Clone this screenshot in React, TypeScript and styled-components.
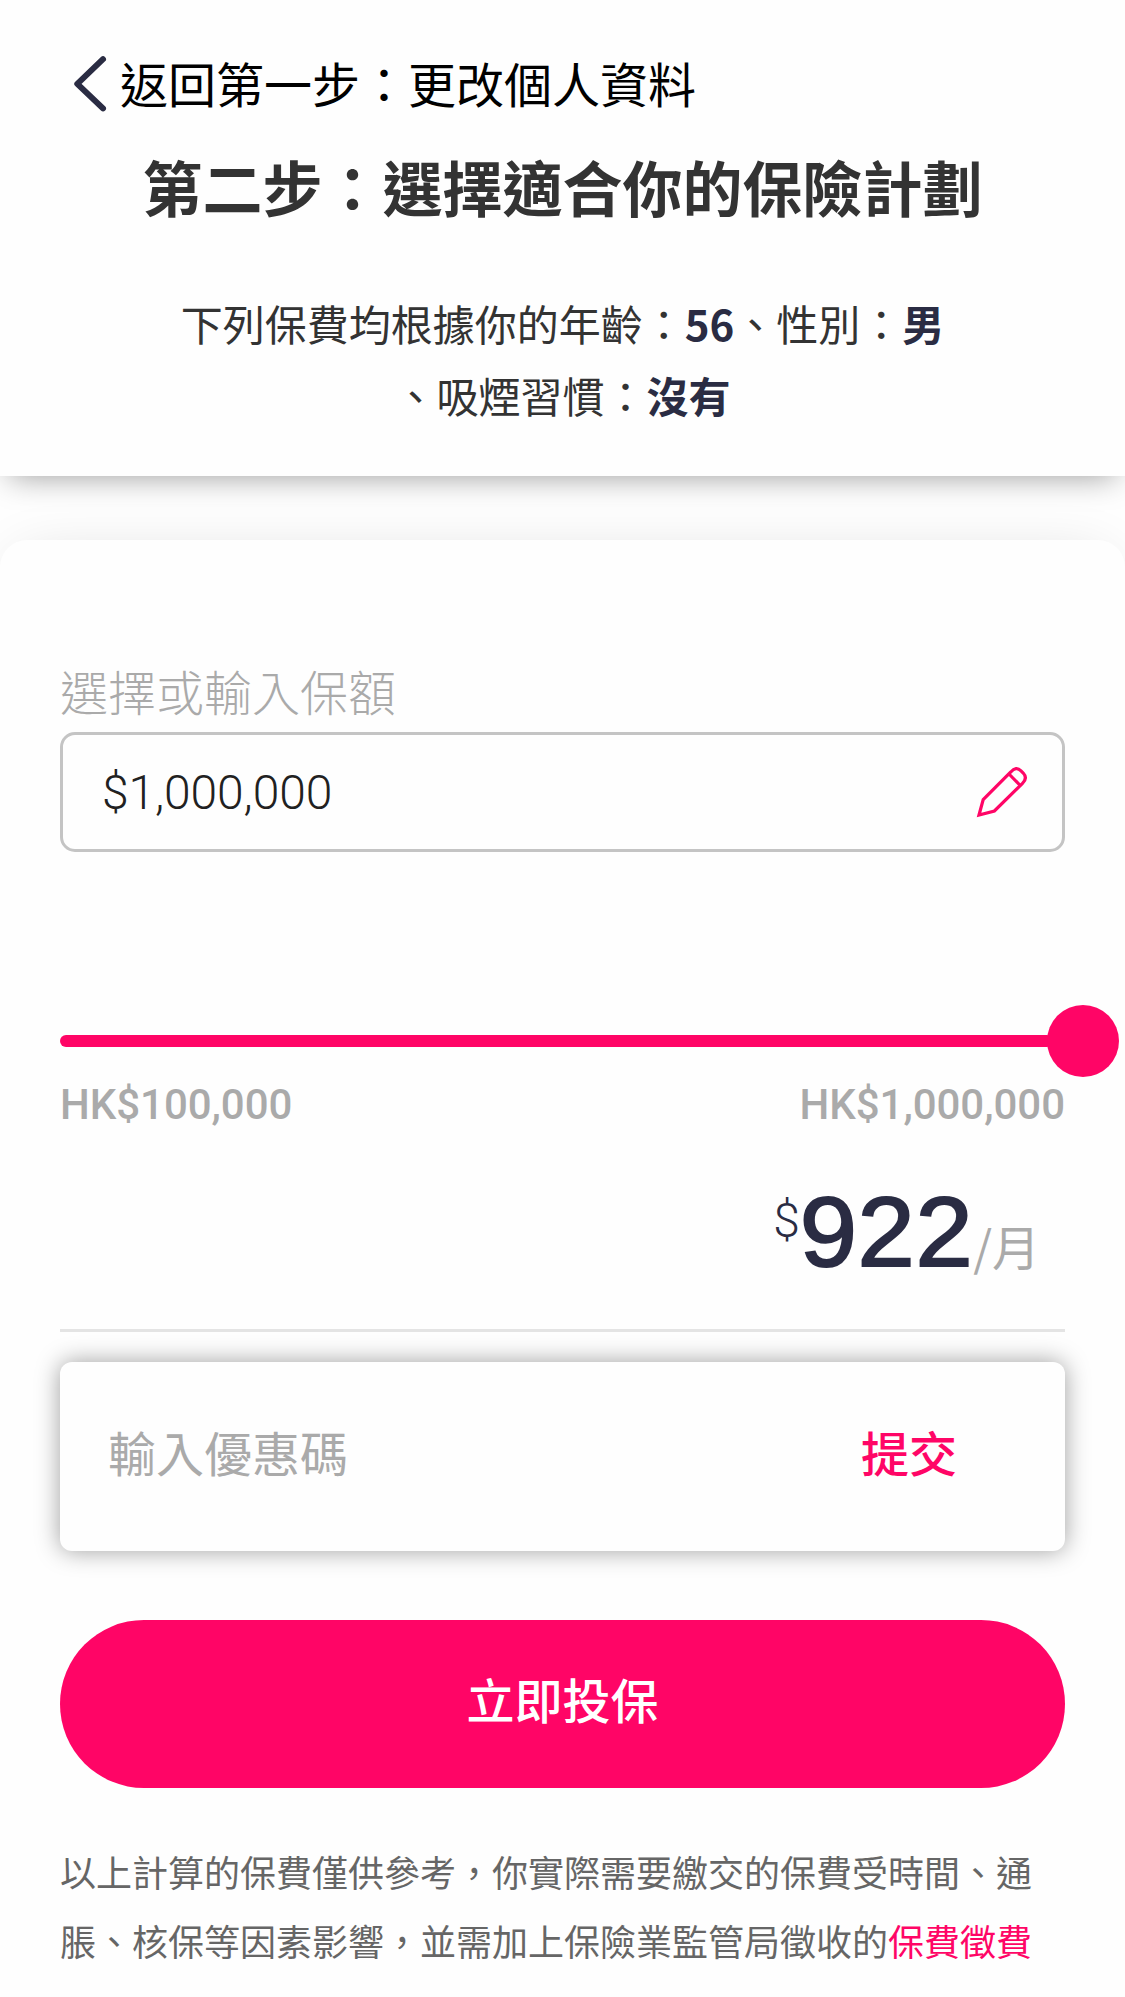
import React from "react";
import styled, { createGlobalStyle } from "styled-components";

const PINK = "#ff0566";
const NAVY = "#2a2c43";
const CJK = `"Noto Sans CJK TC", sans-serif`;
const LATIN = `Roboto, "Noto Sans CJK TC", sans-serif`;

const GlobalStyle = createGlobalStyle`
  *, *::before, *::after { box-sizing: border-box; }
  body { margin: 0; background: #fff; font-family: ${CJK}; }
  button, input { font: inherit; border: 0; padding: 0; background: none; outline: 0; }
`;

const Page = styled.main`
  display: flex;
  flex-direction: column;
  gap: 64px;
  width: 1125px;
  height: 1997px;
  overflow: hidden;
  background: #fefefe;
`;

const Header = styled.header`
  display: flex;
  flex-direction: column;
  height: 476px;
  padding: 48px 72px 0;
  background: #fefefe;
  box-shadow: 0 9px 30px -9px rgba(0, 0, 0, 0.4);
`;

const BackLink = styled.a`
  display: flex;
  align-items: center;
  height: 72px;
  color: #000;
  font-size: 48px;
  line-height: 72px;
  text-decoration: none;
`;

const BackText = styled.span`
  padding-bottom: 4px;
`;

const BackIcon = styled.svg`
  width: 48px;
  height: 60px;
  flex: none;
`;

const Title = styled.h1`
  margin: 24px 0 0;
  color: #333;
  font-size: 60px;
  font-weight: 700;
  line-height: 84px;
  text-align: center;
`;

const Summary = styled.p`
  margin: 59px 0 0;
  color: #333;
  font-size: 42px;
  line-height: 72px;
  text-align: center;
`;

const Value = styled.strong`
  color: ${NAVY};
  font-weight: 700;
`;

const Card = styled.section`
  display: flex;
  flex-direction: column;
  flex: 1;
  padding: 115px 60px 0;
  border-radius: 27px 27px 0 0;
  background: #fefefe;
  box-shadow: 0 0 60px -20px rgba(0, 0, 0, 0.16);
`;

const Label = styled.label`
  height: 77px;
  color: #aaa;
  font-size: 48px;
  font-weight: 300;
  line-height: 70px;
`;

const AmountField = styled.div`
  display: flex;
  align-items: center;
  justify-content: space-between;
  height: 120px;
  padding: 0 32px 0 39px;
  border: 3px solid #c4c4c4;
  border-radius: 15px;
`;

const AmountInput = styled.input`
  width: 600px;
  color: #212121;
  font-family: ${LATIN};
  font-size: 48px;
  font-weight: 300;
  letter-spacing: -0.12px;
`;

const PencilIcon = styled.svg`
  width: 56px;
  height: 56px;
`;

const Slider = styled.div`
  display: flex;
  align-items: center;
  width: 1059px;
  height: 72px;
  margin-top: 153px;
`;

const Track = styled.div`
  flex: 1;
  height: 12px;
  margin-right: -6px;
  border-radius: 6px;
  background: ${PINK};
`;

const Thumb = styled.div`
  width: 72px;
  height: 72px;
  border-radius: 50%;
  background: ${PINK};
`;

const Range = styled.div`
  display: flex;
  justify-content: space-between;
  margin-top: 4px;
  color: #aaa;
  font-family: ${LATIN};
  font-size: 42px;
  font-weight: 500;
  letter-spacing: -0.05px;
  line-height: 48px;
`;

const Price = styled.div`
  display: flex;
  align-items: baseline;
  justify-content: flex-end;
  height: 203px;
  padding: 31px 25px 0 0;
  border-bottom: 3px solid #e4e4e4;
  color: ${NAVY};
  line-height: 144px;
`;

const Currency = styled.span`
  align-self: flex-start;
  padding-top: 33px;
  font-family: ${LATIN};
  font-size: 48px;
  font-weight: 300;
  line-height: 56px;
`;

const Figure = styled.span`
  margin-left: 8px;
  font-family: "Liberation Sans", Arial, sans-serif;
  font-size: 98px;
  letter-spacing: 0.6px;
  -webkit-text-stroke: 2px ${NAVY};
  transform: scaleX(1.05);
  transform-origin: right center;
`;

const Period = styled.span`
  color: #aaa;
  font-size: 48px;
  font-weight: 400;
`;

const Promo = styled.form`
  display: flex;
  align-items: center;
  justify-content: space-between;
  height: 189px;
  margin-top: 30px;
  padding: 0 108px 11px 48px;
  border-radius: 12px;
  background: #fefefe;
  box-shadow: 0 0 24px rgba(0, 0, 0, 0.38);
`;

const PromoInput = styled.input`
  width: 500px;
  height: 90px;
  font-size: 48px;

  &::placeholder {
    color: #aaa;
    opacity: 1;
  }
`;

const SubmitButton = styled.button`
  color: ${PINK};
  font-size: 48px;
  font-weight: 500;
  line-height: 72px;
`;

const BuyButton = styled.button`
  flex: none;
  height: 168px;
  margin-top: 69px;
  padding-bottom: 12px;
  border-radius: 84px;
  background: ${PINK};
  color: #fff;
  font-size: 48px;
  font-weight: 500;
`;

const Note = styled.p`
  margin: 49px 0 0;
  color: #666;
  font-size: 36px;
  line-height: 69px;
`;

const NoteLink = styled.a`
  color: ${PINK};
  text-decoration: none;
`;

export default function App() {
  return (
    <Page>
      <GlobalStyle />
      <Header>
        <BackLink>
          <BackIcon viewBox="0 0 48 60" fill="none" stroke={NAVY} strokeWidth="6" strokeLinecap="round" strokeLinejoin="round">
            <path d="M31 5.2 5.3 29.8 31 54.4" />
          </BackIcon>
          <BackText>返回第一步：更改個人資料</BackText>
        </BackLink>
        <Title>第二步：選擇適合你的保險計劃</Title>
        <Summary>
          下列保費均根據你的年齡：<Value>56</Value>、性別：<Value>男</Value>
          <br />
          、吸煙習慣：<Value>沒有</Value>
        </Summary>
      </Header>
      <Card>
        <Label>選擇或輸入保額</Label>
        <AmountField>
          <AmountInput defaultValue="$1,000,000" />
          <PencilIcon viewBox="0 0 56 56" fill="none" stroke={PINK} strokeWidth="3.2">
            <path d="M5 51 9.2 35.6 36.8 8Q42 2 47 6.8L49.2 9Q54 14.2 48.3 19.6L20.4 47Z" />
            <path d="M35 10 45.8 21" />
          </PencilIcon>
        </AmountField>
        <Slider>
          <Track />
          <Thumb />
        </Slider>
        <Range>
          <span>HK$100,000</span>
          <span>HK$1,000,000</span>
        </Range>
        <Price>
          <Currency>$</Currency>
          <Figure>922</Figure>
          <Period>/月</Period>
        </Price>
        <Promo>
          <PromoInput placeholder="輸入優惠碼" />
          <SubmitButton type="button">提交</SubmitButton>
        </Promo>
        <BuyButton type="button">立即投保</BuyButton>
        <Note>
          以上計算的保費僅供參考，你實際需要繳交的保費受時間、通脹、核保等因素影響，並需加上保險業監管局徵收的<NoteLink>保費徵費</NoteLink>
        </Note>
      </Card>
    </Page>
  );
}
